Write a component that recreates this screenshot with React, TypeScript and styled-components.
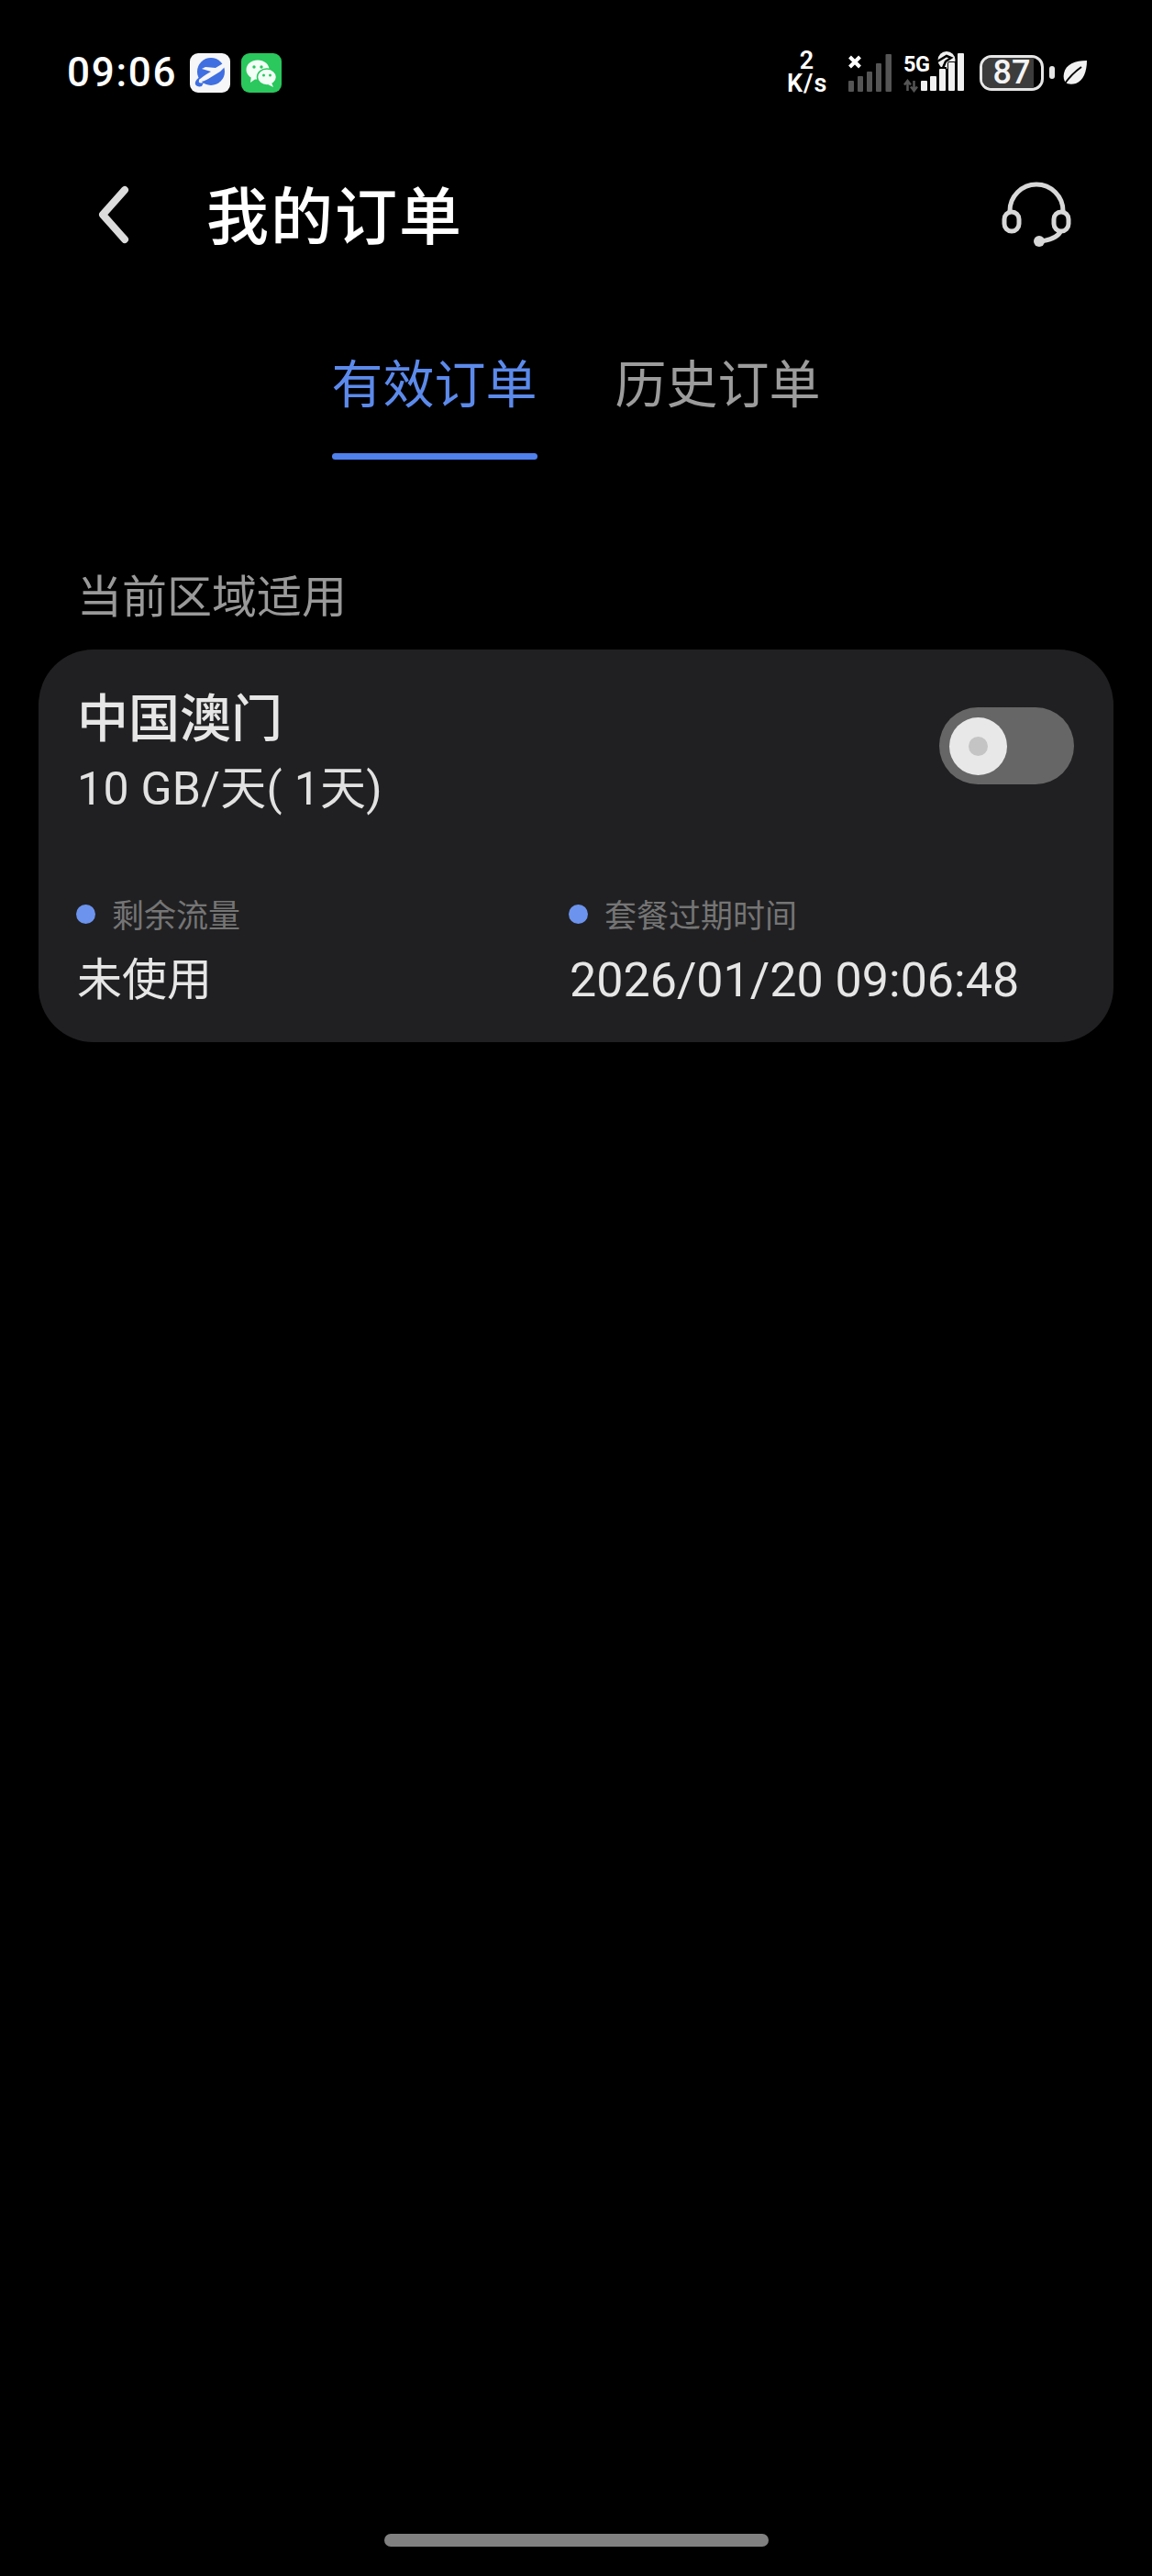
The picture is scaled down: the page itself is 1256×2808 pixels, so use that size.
import * as React from 'react'
import styled, { createGlobalStyle } from 'styled-components'

const CJK = `"Noto Sans CJK SC", "Noto Sans", sans-serif`
const LATIN = `"Roboto", "Noto Sans CJK SC", sans-serif`

const GlobalStyle = createGlobalStyle`
  html, body {
    margin: 0;
    padding: 0;
    background: #000;
  }
`

const Page = styled.div`
  width: 1256px;
  height: 2808px;
  display: flex;
  flex-direction: column;
  background: #000;
  font-family: ${CJK};
`

const StatusBar = styled.div`
  height: 78px;
  margin-top: 40px;
  padding: 0 71px 0 73px;
  display: flex;
  align-items: center;
  justify-content: space-between;
  color: #fff;
`

const StatusLeft = styled.div`
  display: flex;
  align-items: center;
  gap: 12px;
`

const Clock = styled.span`
  font-family: ${LATIN};
  font-size: 44px;
  font-weight: 500;
  letter-spacing: 1.7px;
  margin-right: 2px;
`

const StatusRight = styled.div`
  display: flex;
  align-items: center;
`

const Speed = styled.div`
  width: 44px;
  margin-right: 23px;
  font-family: ${LATIN};
  font-size: 27px;
  line-height: 25px;
  font-weight: 600;
  letter-spacing: 1px;
  text-align: center;
`

const SignalSlot = styled.div<{ $gap: number }>`
  display: flex;
  margin-right: ${(p) => p.$gap}px;
`

const Battery = styled.div`
  position: relative;
  width: 70px;
  height: 39px;
  box-sizing: border-box;
  border: 3px solid #e6e6e6;
  border-radius: 13px;
  display: flex;
  align-items: center;
  justify-content: center;
  font-family: ${LATIN};
  font-size: 36px;
  line-height: 33px;
  font-weight: 500;
  color: #f4f4f4;
`

const BatteryFill = styled.div`
  position: absolute;
  left: 0;
  top: 0;
  bottom: 0;
  border-radius: 10px 0 0 10px;
  background: #3c3c3c;
`

const BatteryLabel = styled.span`
  position: relative;
`

const BatteryTip = styled.div`
  width: 6px;
  height: 14px;
  margin: 0 9px 0 6px;
  border-radius: 3px;
  background: #e6e6e6;
`

const TitleBar = styled.div`
  height: 108px;
  margin-top: 62px;
  padding: 0 84px 0 90px;
  display: flex;
  align-items: center;
  color: #fff;
`

const Title = styled.h1`
  margin: 0 0 0 75px;
  padding-bottom: 5px;
  flex: 1;
  font-size: 68px;
  font-weight: 500;
  line-height: 80px;
  letter-spacing: 2px;
`

const Tabs = styled.div`
  margin-top: 87px;
  display: flex;
  justify-content: center;
  gap: 85px;
`

const Tab = styled.div<{ $active?: boolean }>`
  display: flex;
  flex-direction: column;
  align-items: center;
  font-size: 56px;
  line-height: 80px;
  color: ${(p) => (p.$active ? '#5c8aeb' : '#9c9c9c')};
`

const TabLine = styled.div<{ $active?: boolean }>`
  width: 100%;
  height: 7px;
  margin-top: 39px;
  border-radius: 4px;
  background: ${(p) => (p.$active ? '#4f80ee' : 'transparent')};
`

const SectionLabel = styled.div`
  margin: 112px 0 0 84px;
  font-size: 49px;
  line-height: 68px;
  color: #999;
`

const Card = styled.div`
  margin: 27px 42px 0;
  height: 428px;
  box-sizing: border-box;
  border-radius: 60px;
  background: #202022;
  padding: 37px 43px 0 41px;
  display: flex;
  flex-direction: column;
`

const CardHead = styled.div`
  display: flex;
  justify-content: space-between;
  align-items: flex-start;
  padding-left: 1px;
`

const Region = styled.div`
  font-size: 56px;
  line-height: 68px;
  font-weight: 500;
  color: #e6e6e6;
`

const Plan = styled.div`
  margin-top: 17px;
  font-family: ${LATIN};
  font-size: 50px;
  line-height: 60px;
  letter-spacing: 0.3px;
  white-space: pre;
  color: #e2e2e2;
`

const Toggle = styled.div`
  margin-top: 26px;
  width: 147px;
  height: 84px;
  border-radius: 42px;
  background: #666;
  display: flex;
  align-items: center;
  padding-left: 11px;
  box-sizing: border-box;
`

const Knob = styled.div`
  width: 63px;
  height: 63px;
  border-radius: 50%;
  background: #e8e8e8;
  display: flex;
  align-items: center;
  justify-content: center;

  &::after {
    content: '';
    width: 21px;
    height: 21px;
    border-radius: 50%;
    background: #c4c4c4;
  }
`

const Stats = styled.div`
  margin-top: 82px;
  display: grid;
  grid-template-columns: 537px 1fr;
`

const StatLabel = styled.div`
  display: flex;
  align-items: center;
  gap: 18px;
  font-size: 35px;
  line-height: 48px;
  color: #757575;
`

const Dot = styled.span`
  width: 21px;
  height: 21px;
  border-radius: 50%;
  background: #6c93ee;
`

const StatValue = styled.div<{ $size: number }>`
  margin-top: 16px;
  padding-left: 1px;
  font-family: ${LATIN};
  font-size: ${(p) => p.$size}px;
  line-height: 66px;
  color: #e6e6e6;
`

const Spacer = styled.div`
  flex: 1;
`

const HomeBar = styled.div`
  align-self: center;
  width: 419px;
  height: 14px;
  margin-bottom: 32px;
  border-radius: 7px;
  background: #808080;
`

const TripIcon = () => (
  <svg width="44" height="43" viewBox="0 0 44 43">
    <rect width="44" height="43" rx="9" fill="#f6f6f8" />
    <circle cx="23" cy="20" r="15" fill="#3f6fe0" />
    <path d="M6 34 C5 30 9 27 12 25 L10 30 C9 32 11 33 15 32 L13 36 C10 37 7 36 6 34 Z" fill="#3f6fe0" />
    <path
      d="M38 10 C41 8 42 10 40 13 L33 20 L20 28 C15 31 10 32 10 30 C10 28 14 26 18 23 L23 20 L13 17 L17 15 L28 16 Z"
      fill="#f6f6f8"
    />
  </svg>
)

const WechatIcon = () => (
  <svg width="44" height="43" viewBox="0 0 44 43">
    <rect width="44" height="43" rx="9" fill="#2ac85d" />
    <ellipse cx="18" cy="18" rx="12.5" ry="10.5" fill="#f2fff6" />
    <path d="M11 25 L10 32 L17 27 Z" fill="#f2fff6" />
    <ellipse cx="28" cy="26" rx="10.5" ry="9" fill="#f2fff6" stroke="#2ac85d" strokeWidth="1.5" />
    <path d="M33 32 L35 37 L29 34 Z" fill="#f2fff6" />
    <circle cx="14" cy="15" r="1.7" fill="#2ac85d" />
    <circle cx="22" cy="15" r="1.7" fill="#2ac85d" />
    <circle cx="24.5" cy="24" r="1.5" fill="#2ac85d" />
    <circle cx="31.5" cy="24" r="1.5" fill="#2ac85d" />
  </svg>
)

const SimOneIcon = () => (
  <svg width="47" height="41" viewBox="0 0 47 41">
    <path d="M1.5 3 L12.5 14 M12.5 3 L1.5 14" stroke="#fff" strokeWidth="4" />
    <g fill="#555">
      <rect x="0" y="29" width="6" height="12" rx="1" />
      <rect x="10" y="24" width="6" height="17" rx="1" />
      <rect x="20" y="19" width="6" height="22" rx="1" />
      <rect x="30" y="10" width="6" height="31" rx="1" />
      <rect x="40.5" y="0" width="6.5" height="41" rx="1" />
    </g>
  </svg>
)

const SimTwoIcon = () => (
  <svg width="66" height="46" viewBox="0 0 66 46">
    <text x="0" y="22" fontFamily="Roboto" fontSize="23.5" fontWeight="700" letterSpacing="-0.5" fill="#fff">
      5G
    </text>
    <path d="M4.5 43 V33 M1 36.5 L4.5 32 L8 36.5 M11.5 32 V42 M8 38.5 L11.5 43 L15 38.5" fill="none" stroke="#555" strokeWidth="2.5" />
    <circle cx="47" cy="9.5" r="9.5" fill="#f0f0f0" />
    <path d="M37 11 L47 5 L52 7 L46 11 L43 18" fill="none" stroke="#000" strokeWidth="2.5" />
    <rect x="38" y="17" width="9" height="4" fill="#000" />
    <g fill="#f0f0f0">
      <rect x="19" y="32" width="7" height="11" rx="1" />
      <rect x="29" y="27" width="7" height="16" rx="1" />
      <rect x="39" y="19" width="7" height="24" rx="1" />
      <rect x="49" y="12" width="7" height="31" rx="1" stroke="#000" strokeWidth="2" paintOrder="stroke" />
      <rect x="59" y="2" width="7" height="41" rx="1" />
    </g>
  </svg>
)

const LeafIcon = () => (
  <svg width="26" height="26" viewBox="0 0 26 26">
    <path d="M26 0 C13 0 3 4 1 14 C0 18 1 22 3 24 C5 26 10 26 14 25 C22 22 26 12 26 0 Z" fill="#f2f2f2" />
    <path d="M2 25 C7 18 13 12 20 7" fill="none" stroke="#000" strokeWidth="2" />
  </svg>
)

const BackIcon = () => (
  <svg width="60" height="80" viewBox="0 0 60 80">
    <path d="M46 13 L22 40 L46 67" fill="none" stroke="#dcdcdc" strokeWidth="8" strokeLinecap="round" strokeLinejoin="round" />
  </svg>
)

const HeadsetIcon = () => (
  <svg width="84" height="80" viewBox="0 0 84 80">
    <g fill="none" stroke="#d8d8d8" strokeWidth="5">
      <path d="M13 36 A 29 29 0 0 1 71 36" />
      <rect x="7" y="37" width="16" height="21" rx="8" />
      <rect x="61" y="37" width="16" height="21" rx="8" />
      <path d="M68 59 C64 65 56 68 45 69" />
    </g>
    <circle cx="45" cy="69" r="6" fill="#d8d8d8" />
  </svg>
)

export default function App() {
  return (
    <Page>
      <GlobalStyle />
      <StatusBar>
        <StatusLeft>
          <Clock>09:06</Clock>
          <TripIcon />
          <WechatIcon />
        </StatusLeft>
        <StatusRight>
          <Speed>
            2
            <br />
            K/s
          </Speed>
          <SignalSlot $gap={13}>
            <SimOneIcon />
          </SignalSlot>
          <SignalSlot $gap={17}>
            <SimTwoIcon />
          </SignalSlot>
          <Battery>
            <BatteryFill style={{ width: '87%' }} />
            <BatteryLabel>87</BatteryLabel>
          </Battery>
          <BatteryTip />
          <LeafIcon />
        </StatusRight>
      </StatusBar>
      <TitleBar>
        <BackIcon />
        <Title>我的订单</Title>
        <HeadsetIcon />
      </TitleBar>
      <Tabs>
        <Tab $active>
          有效订单
          <TabLine $active />
        </Tab>
        <Tab>
          历史订单
          <TabLine />
        </Tab>
      </Tabs>
      <SectionLabel>当前区域适用</SectionLabel>
      <Card>
        <CardHead>
          <div>
            <Region>中国澳门</Region>
            <Plan>10 GB/天( 1天)</Plan>
          </div>
          <Toggle>
            <Knob />
          </Toggle>
        </CardHead>
        <Stats>
          <div>
            <StatLabel>
              <Dot />
              剩余流量
            </StatLabel>
            <StatValue $size={49}>未使用</StatValue>
          </div>
          <div>
            <StatLabel>
              <Dot />
              套餐过期时间
            </StatLabel>
            <StatValue $size={52}>2026/01/20 09:06:48</StatValue>
          </div>
        </Stats>
      </Card>
      <Spacer />
      <HomeBar />
    </Page>
  )
}
